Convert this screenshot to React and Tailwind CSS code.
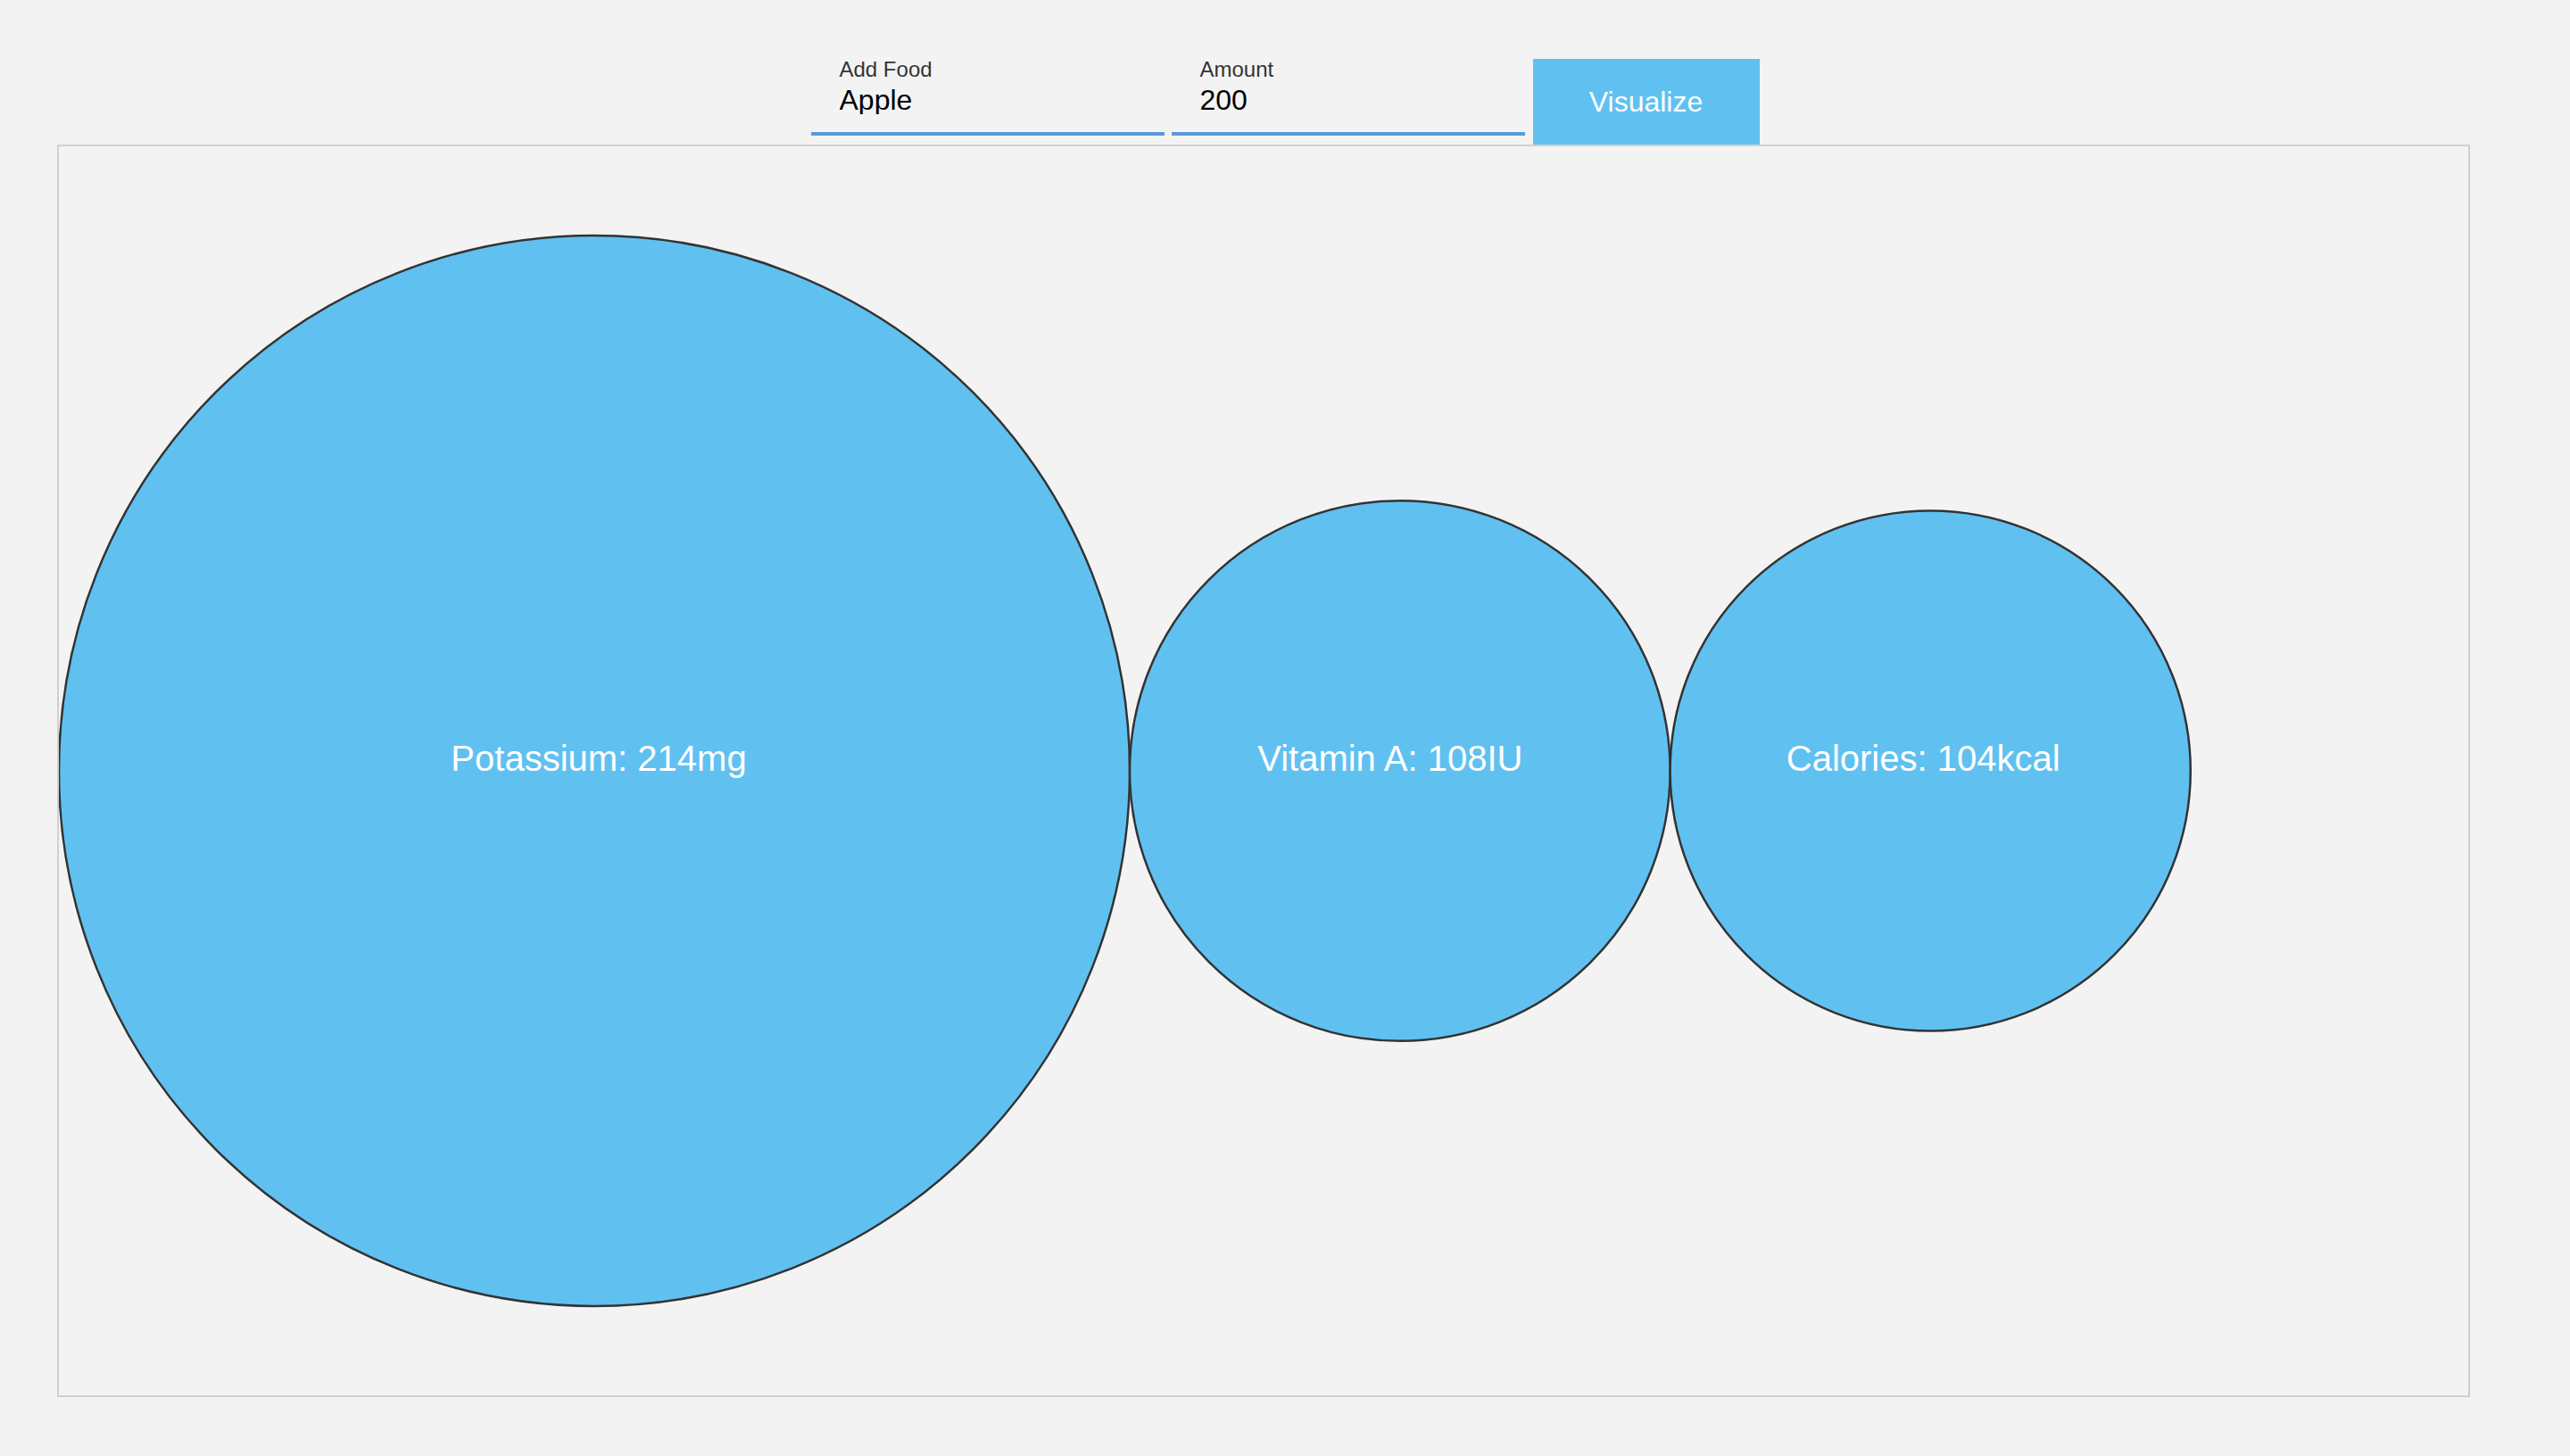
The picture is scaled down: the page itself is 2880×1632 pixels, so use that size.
import React from "react";

const nutrients = [
  { label: "Potassium: 214mg", value: 214, dx: 5 },
  { label: "Vitamin A: 108IU", value: 108, dx: -11 },
  { label: "Calories: 104kcal", value: 104, dx: -8 },
];

function Field({ label, value, className }) {
  return (
    <div className={"flex w-[396px] flex-col " + (className || "")}>
      <label className="pl-[32px] text-[24px] leading-none text-[#333333]">{label}</label>
      <input
        readOnly
        value={value}
        className="mt-[6px] h-[32px] w-full bg-transparent pl-[32px] text-[32px] leading-none text-black outline-none"
        style={{ fontFamily: '"Liberation Sans", Arial, sans-serif' }}
      />
      <div className="mt-[20px] h-[4px] w-full bg-[#5a9ad8]" />
    </div>
  );
}

export default function App() {
  const max = 214;
  let x = 0;
  const circles = nutrients.map((n) => {
    const r = (n.value / max) * 600;
    const cx = x + r;
    x = cx + r;
    return { ...n, r, cx };
  });

  return (
    <div
      className="min-h-screen bg-[#f3f3f3] pt-[66px]"
      style={{ fontFamily: '"Liberation Sans", Arial, Helvetica, sans-serif' }}
    >
      <div className="flex h-[96px] items-start justify-center">
        <Field label="Add Food" value="Apple" />
        <Field label="Amount" value="200" className="ml-[8px]" />
        <button className="ml-[9px] flex h-[96px] w-[254px] items-center justify-center bg-[#60c1f1] text-[32px] leading-none text-white">
          Visualize
        </button>
      </div>
      <div className="ml-[64px] w-[2704px] border-2 border-[#d0d0d0]">
        <svg width="2700" height="1400" className="block">
          {circles.map((c) => (
            <g key={c.label}>
              <circle cx={c.cx} cy={700} r={c.r} fill="#60c1f1" stroke="#333333" strokeWidth="2.5" />
              <text
                x={c.cx + c.dx}
                y={700}
                textAnchor="middle"
                fill="#ffffff"
                fontSize="40"
                fontFamily='"Liberation Sans", Arial, sans-serif'
              >
                {c.label}
              </text>
            </g>
          ))}
        </svg>
      </div>
    </div>
  );
}
